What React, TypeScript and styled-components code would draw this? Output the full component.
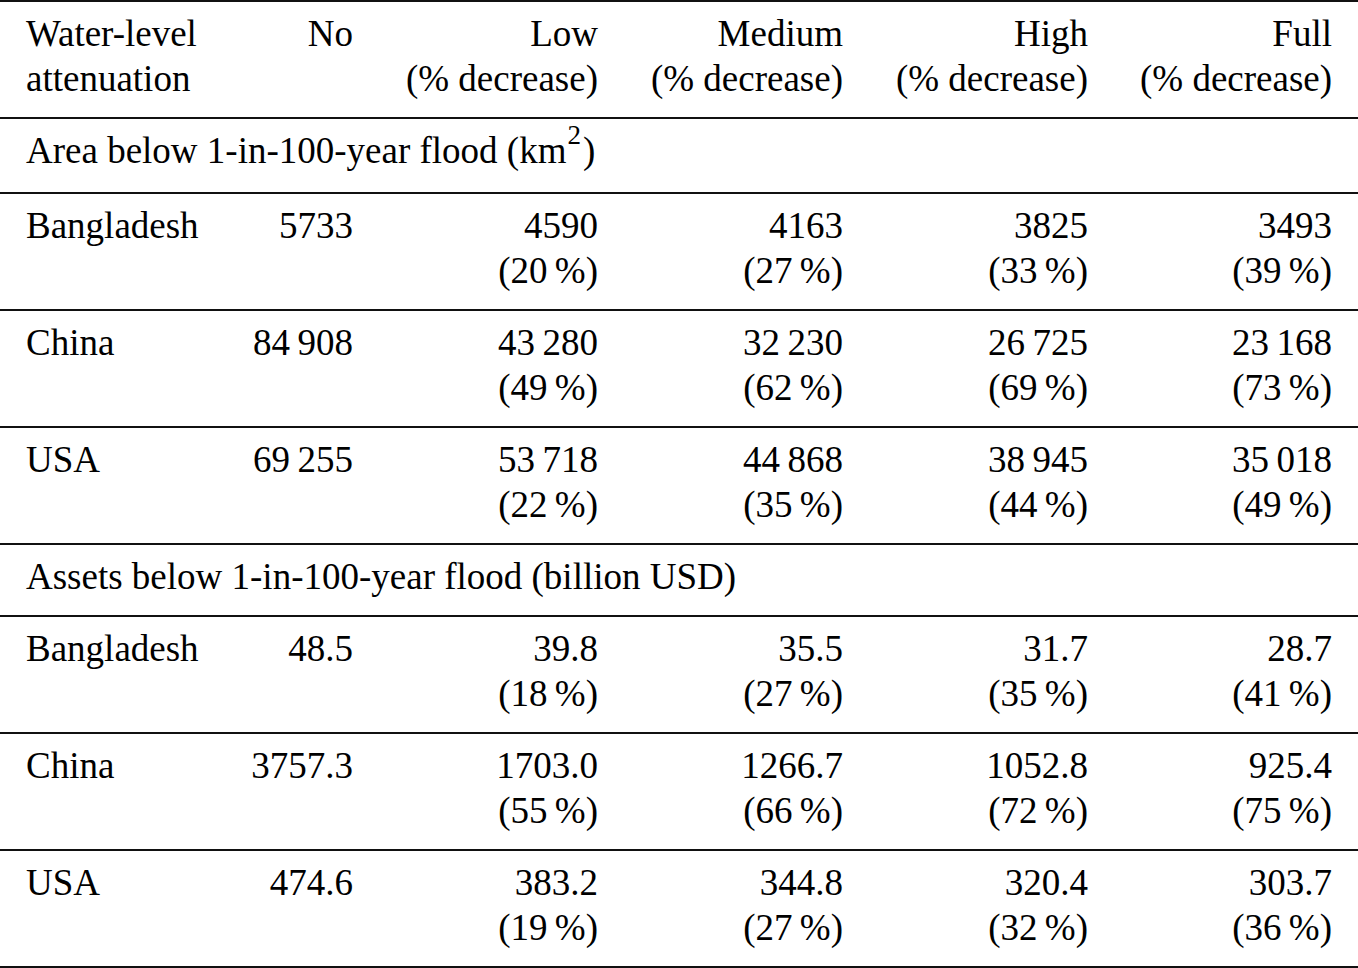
import styled, { createGlobalStyle } from "styled-components";

const GlobalStyle = createGlobalStyle`
  html, body {
    margin: 0;
    padding: 0;
    background: #ffffff;
  }
  body {
    font-family: "Liberation Serif", "Times New Roman", serif;
    color: #000000;
  }
`;

const Table = styled.div`
  width: 1358px;
  font-size: 37px;
  line-height: 45px;
  border-bottom: 2px solid #111;
`;

const Row = styled.div`
  display: grid;
  grid-template-columns: 225px 154px 245px 245px 245px 244px;
  border-top: 2px solid #111;
`;

const Cell = styled.div<{ align?: "left" | "right" }>`
  padding: 9px 26px 16px;
  text-align: ${(props) => props.align || "right"};
  white-space: nowrap;
`;

const SectionCell = styled.div<{ bottom: number }>`
  grid-column: 1 / -1;
  padding: 9px 26px ${(props) => props.bottom}px;
  white-space: nowrap;
`;

const Sup = styled.sup`
  font-size: 27px;
  line-height: 0;
  vertical-align: 19px;
  margin-left: 1px;
  margin-right: 2px;
`;

const Line = styled.div`
  height: 45px;
`;

const T = "\u2009";

type DataRow = {
  name: string;
  none: string;
  values: [string, string][];
};

const columns = ["Low", "Medium", "High", "Full"];

const areaRows: DataRow[] = [
  {
    name: "Bangladesh",
    none: "5733",
    values: [
      ["4590", "20"],
      ["4163", "27"],
      ["3825", "33"],
      ["3493", "39"],
    ],
  },
  {
    name: "China",
    none: `84${T}908`,
    values: [
      [`43${T}280`, "49"],
      [`32${T}230`, "62"],
      [`26${T}725`, "69"],
      [`23${T}168`, "73"],
    ],
  },
  {
    name: "USA",
    none: `69${T}255`,
    values: [
      [`53${T}718`, "22"],
      [`44${T}868`, "35"],
      [`38${T}945`, "44"],
      [`35${T}018`, "49"],
    ],
  },
];

const assetRows: DataRow[] = [
  {
    name: "Bangladesh",
    none: "48.5",
    values: [
      ["39.8", "18"],
      ["35.5", "27"],
      ["31.7", "35"],
      ["28.7", "41"],
    ],
  },
  {
    name: "China",
    none: "3757.3",
    values: [
      ["1703.0", "55"],
      ["1266.7", "66"],
      ["1052.8", "72"],
      ["925.4", "75"],
    ],
  },
  {
    name: "USA",
    none: "474.6",
    values: [
      ["383.2", "19"],
      ["344.8", "27"],
      ["320.4", "32"],
      ["303.7", "36"],
    ],
  },
];

const DataRows = ({ rows }: { rows: DataRow[] }) => (
  <>
    {rows.map((row) => (
      <Row key={row.name}>
        <Cell align="left">{row.name}</Cell>
        <Cell>{row.none}</Cell>
        {row.values.map(([value, pct], idx) => (
          <Cell key={`v${idx}`}>
            <Line>{value}</Line>
            <Line>{`(${pct}${T}%)`}</Line>
          </Cell>
        ))}
      </Row>
    ))}
  </>
);

const App = () => {
  return (
    <>
      <GlobalStyle />
      <Table>
        <Row>
          <Cell align="left">
            <Line>Water-level</Line>
            <Line>attenuation</Line>
          </Cell>
          <Cell>No</Cell>
          {columns.map((col) => (
            <Cell key={col}>
              <Line>{col}</Line>
              <Line>(% decrease)</Line>
            </Cell>
          ))}
        </Row>
        <Row>
          <SectionCell bottom={19}>
            Area below 1-in-100-year flood (km<Sup>2</Sup>)
          </SectionCell>
        </Row>
        <DataRows rows={areaRows} />
        <Row>
          <SectionCell bottom={16}>
            Assets below 1-in-100-year flood (billion USD)
          </SectionCell>
        </Row>
        <DataRows rows={assetRows} />
      </Table>
    </>
  );
};

export default App;
